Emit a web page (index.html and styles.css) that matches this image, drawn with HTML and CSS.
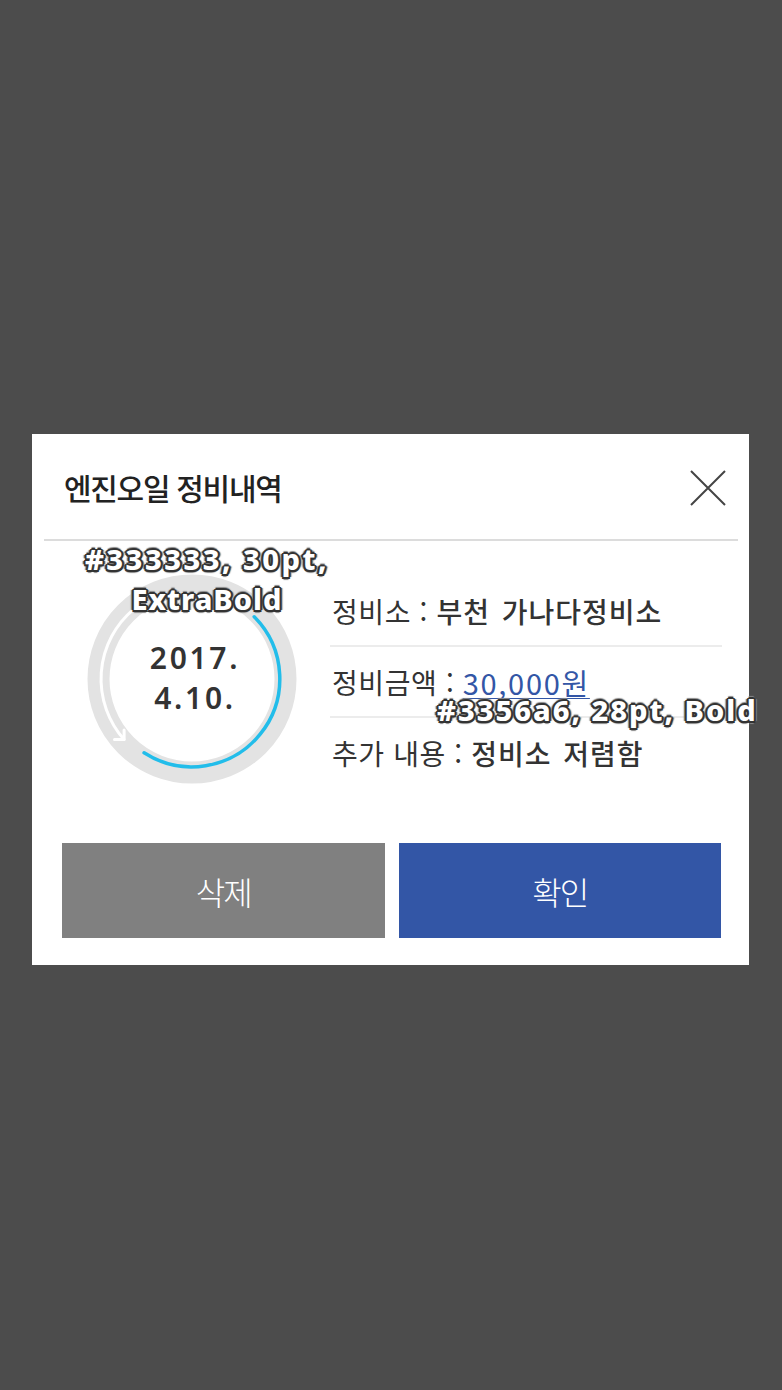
FILE: index.html
```html
<!DOCTYPE html>
<html lang="ko">
<head>
<meta charset="utf-8">
<title>엔진오일 정비내역</title>
<link rel="stylesheet" href="styles.css">
</head>
<body>
<div class="modal">
  <div class="modal-header">
    <h1 class="modal-title">엔진오일 정비내역</h1>
    <button class="close-btn" aria-label="닫기">
      <svg width="36" height="36" viewBox="0 0 36 36"><path d="M1 1 L35 35 M35 1 L1 35" stroke="#444" stroke-width="2" fill="none"/></svg>
    </button>
  </div>
  <div class="divider"></div>
  <div class="modal-body">
    <div class="date-ring">
      <svg class="ring-svg" width="212" height="212" viewBox="0 0 212 212">
        <circle cx="106" cy="106" r="93.5" fill="none" stroke="#e3e3e3" stroke-width="22"/>
        <path d="M47.5 36.3 A91 91 0 0 0 38.1 166.5" fill="none" stroke="#fff" stroke-width="3" stroke-linecap="round"/>
        <polyline points="28.5,166.5 38.1,166.5 38.1,157" fill="none" stroke="#fff" stroke-width="3" stroke-linecap="round" stroke-linejoin="round"/>
        <path d="M168.2 43.8 A88 88 0 0 1 58.1 179.8" fill="none" stroke="#22bdea" stroke-width="3.5" stroke-linecap="round"/>
      </svg>
      <div class="date-text">2017.<br>4.10.</div>
    </div>
    <div class="info">
      <div class="info-row"><span class="label">정비소 : </span><span class="value">부천 가나다정비소</span></div>
      <div class="info-row"><span class="label">정비금액 : </span><span class="amount">30,000원</span></div>
      <div class="info-row"><span class="label">추가 내용 : </span><span class="value">정비소 저렴함</span></div>
    </div>
  </div>
  <div class="actions">
    <button class="btn btn-delete">삭제</button>
    <button class="btn btn-confirm">확인</button>
  </div>
  <div class="note note-date"><span class="note-l1">#333333, 30pt,</span><br><span class="note-l2">ExtraBold</span></div>
  <div class="note note-amount">#3356a6, 28pt, Bold</div>
</div>
</body>
</html>
```

FILE: styles.css
```css
html, body {
  margin: 0;
  padding: 0;
}
body {
  background: #4c4c4c;
  width: 782px;
  height: 1390px;
  overflow: hidden;
  font-family: "Noto Sans CJK KR", "Noto Sans", sans-serif;
}
.modal {
  position: relative;
  margin: 434px 0 0 32px;
  width: 717px;
  height: 531px;
  background: #fff;
  display: flex;
  flex-direction: column;
}
.modal-header {
  height: 105px;
  display: flex;
  align-items: center;
  justify-content: space-between;
  padding: 0 23px 0 32px;
}
.modal-title {
  margin: 0;
  font-size: 30px;
  font-weight: 500;
  letter-spacing: -1.3px;
  color: #222;
  line-height: 1;
}
.close-btn {
  border: 0;
  background: none;
  padding: 0;
  width: 36px;
  height: 36px;
  display: flex;
  margin-top: 3px;
}
.divider {
  height: 2px;
  margin: 0 11px 0 12px;
  background: #dcdcdc;
}
.modal-body {
  height: 302px;
  display: flex;
}
.date-ring {
  position: relative;
  width: 212px;
  height: 212px;
  margin: 32px 0 0 54px;
  display: flex;
  align-items: center;
  justify-content: center;
}
.ring-svg {
  position: absolute;
  left: 0;
  top: 0;
}
.date-text {
  position: relative;
  font-family: "Noto Sans", sans-serif;
  font-weight: 600;
  font-size: 30px;
  line-height: 40px;
  letter-spacing: 2.7px;
  color: #333;
  text-align: center;
  margin-left: 6px;
  margin-top: -2px;
}
.info {
  margin: 35px 0 0 32px;
  width: 392px;
}
.info-row {
  height: 69px;
  display: flex;
  align-items: center;
  font-size: 28px;
  letter-spacing: 0.6px;
  color: #333;
  white-space: pre;
  padding-left: 2px;
}
.info-row + .info-row {
  border-top: 2px solid #ececec;
}
.label {
  font-weight: 400;
}
.value {
  font-weight: 500;
  letter-spacing: 1px;
  word-spacing: 3px;
}
.amount {
  color: #3356a6;
  font-size: 29px;
  letter-spacing: 1.7px;
  text-decoration: underline;
  text-decoration-thickness: 1px;
  text-underline-offset: 3px;
}
.actions {
  height: 95px;
  display: flex;
  gap: 14px;
  padding: 0 28px 27px 30px;
}
.btn {
  flex: 1;
  border: 0;
  margin: 0;
  color: #fff;
  font-family: "Noto Sans CJK KR", sans-serif;
  font-size: 32px;
  font-weight: 300;
  letter-spacing: -2px;
  cursor: pointer;
}
.btn-delete {
  background: #808080;
}
.btn-confirm {
  background: #3356a6;
}
.note {
  position: absolute;
  font-family: "Noto Sans", sans-serif;
  font-weight: 800;
  font-size: 29px;
  line-height: 40px;
  letter-spacing: 2px;
  color: #fff;
  white-space: nowrap;
  text-shadow:
    2px 0 0 #333, -2px 0 0 #333, 0 2px 0 #333, 0 -2px 0 #333,
    1.5px 1.5px 0 #333, -1.5px 1.5px 0 #333, 1.5px -1.5px 0 #333, -1.5px -1.5px 0 #333,
    3px 0 1px #888, -3px 0 1px #888, 0 3px 1px #888, 0 -3px 1px #888;
}
.note-date {
  left: 0;
  width: 350px;
  top: 105px;
  text-align: center;
}
.note-l1 {
  letter-spacing: 2.5px;
}
.note-l2 {
  letter-spacing: 1px;
}
.note-amount {
  left: 405px;
  top: 256px;
}
```
